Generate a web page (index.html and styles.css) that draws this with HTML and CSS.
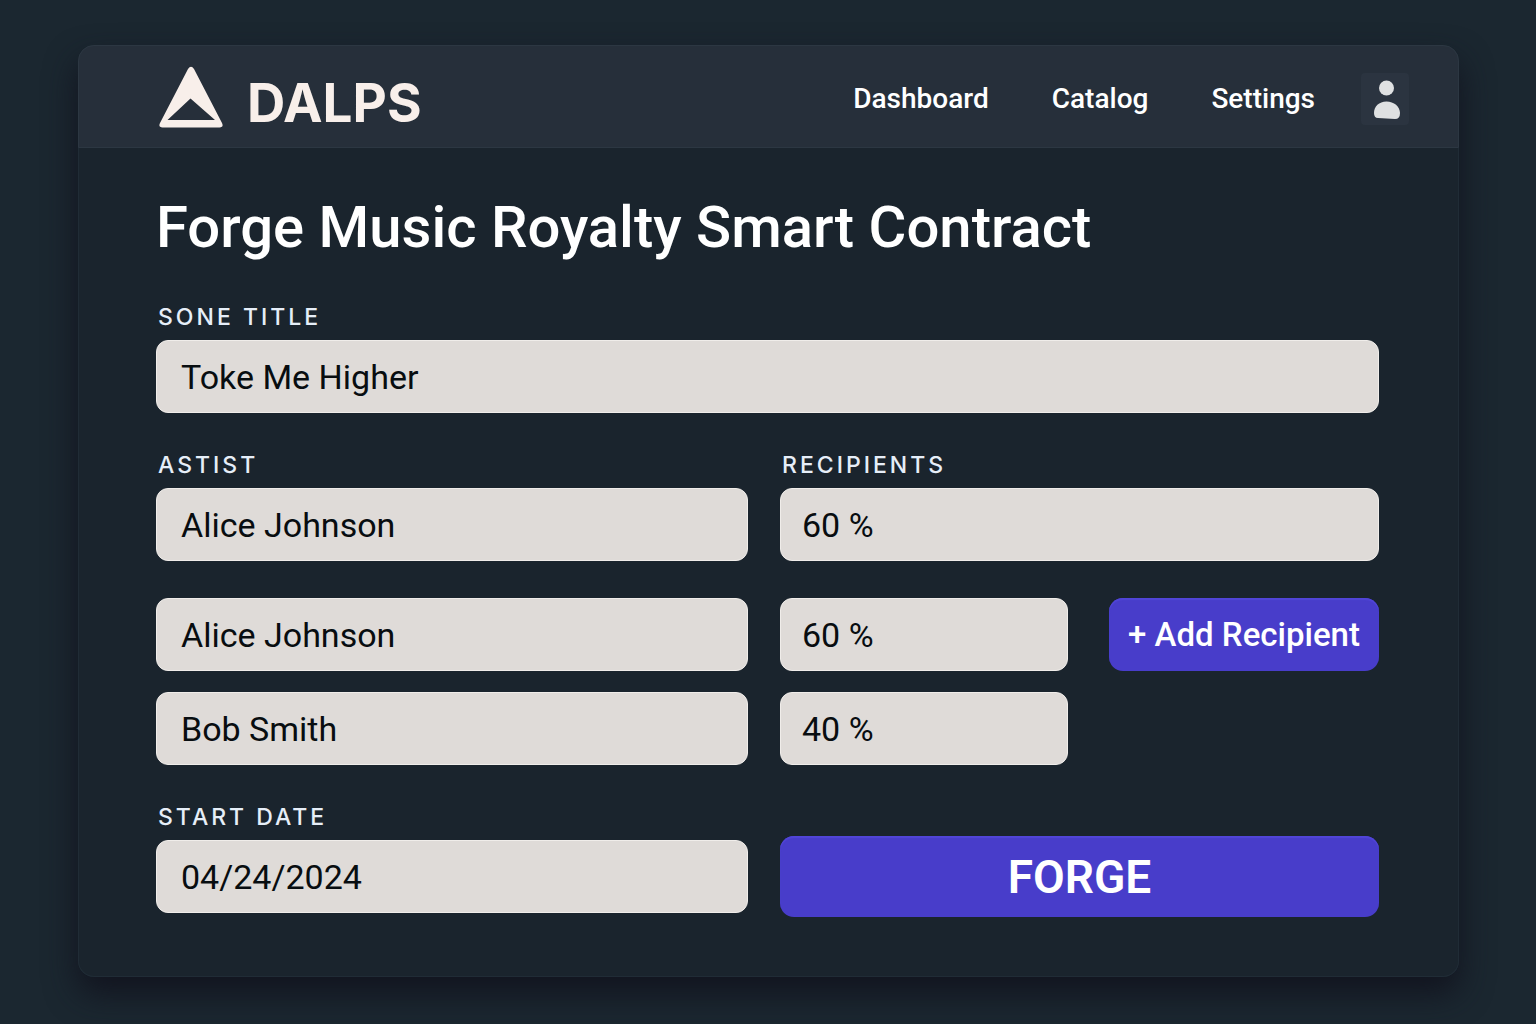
FILE: index.html
```
<!DOCTYPE html>
<html lang="en">
<head>
<meta charset="utf-8">
<meta name="viewport" content="width=device-width, initial-scale=1">
<title>DALPS – Forge Music Royalty Smart Contract</title>
<link rel="stylesheet" href="styles.css">
</head>
<body>
<div class="card">
  <header class="topbar">
    <a class="brand" href="#">
      <svg class="brand-mark" viewBox="0 0 64 62" aria-hidden="true">
        <path fill-rule="evenodd" d="M29 3Q32 -1.500 35 3L63 57Q65 61.500 60.500 61.500H3.500Q-1 61.500 1 57ZM31.500 32.500L8.500 54H56Z"/>
      </svg>
      <span class="brand-name">DALPS</span>
    </a>
    <nav class="nav" aria-label="Main">
      <a href="#">Dashboard</a>
      <a href="#">Catalog</a>
      <a href="#">Settings</a>
    </nav>
    <button class="avatar" type="button" aria-label="Account">
      <svg viewBox="0 0 28 40" aria-hidden="true">
        <circle cx="13.500" cy="8" r="7.500"/>
        <path d="M13.500 21.500C21 21.500 27 26.500 27 33Q27 39 22 39L5 38Q1 38 1 33C1 26.500 6 21.500 13.500 21.500Z"/>
      </svg>
    </button>
  </header>

  <main class="content">
    <h1>Forge Music Royalty Smart Contract</h1>
    <form class="form">
      <div class="field">
        <label for="title">SONE TITLE</label>
        <input id="title" type="text" value="Toke Me Higher">
      </div>

      <div class="pair">
        <div class="field">
          <label for="artist">ASTIST</label>
          <input id="artist" type="text" value="Alice Johnson">
        </div>
        <div class="field">
          <label for="recipients">RECIPIENTS</label>
          <input id="recipients" type="text" value="60 %">
        </div>
      </div>

      <div class="splits">
        <div class="pair">
          <input type="text" aria-label="Recipient 1 name" value="Alice Johnson">
          <div class="share">
            <input type="text" aria-label="Recipient 1 share" value="60 %">
            <button class="button add" type="button">+ Add Recipient</button>
          </div>
        </div>
        <div class="pair">
          <input type="text" aria-label="Recipient 2 name" value="Bob Smith">
          <div class="share">
            <input type="text" aria-label="Recipient 2 share" value="40 %">
          </div>
        </div>
      </div>

      <div class="pair">
        <div class="field">
          <label for="start">START DATE</label>
          <input id="start" type="text" value="04/24/2024">
        </div>
        <button class="button forge" type="submit">FORGE</button>
      </div>
    </form>
  </main>
</div>
</body>
</html>
```
FILE: styles.css
```
* {
  box-sizing: border-box;
}

body {
  margin: 0;
  min-height: 100vh;
  padding: 45px 77px 47px 78px;
  display: flex;
  background: #1b2730;
  color: #fff;
  font-family: Roboto, "Liberation Sans", sans-serif;
}

.card {
  flex: 1;
  display: flex;
  flex-direction: column;
  border-radius: 16px;
  background: #1a242d;
  box-shadow: 0 16px 32px 0 #12141f, inset 0 0 0 1px #202c36;
}

.topbar {
  height: 103px;
  padding: 0 49px 0 80px;
  display: flex;
  align-items: center;
  border: 1px solid #2c3742;
  border-radius: 16px 16px 0 0;
  background: #262f3a;
}

.brand {
  display: flex;
  align-items: center;
  gap: 24px;
  margin-right: auto;
  color: #f8efea;
  text-decoration: none;
}

.brand-mark {
  width: 64px;
  height: 62px;
  fill: currentColor;
}

.brand-name {
  padding-top: 12px;
  font: 700 53px/56px Inter, "Liberation Sans", sans-serif;
}

.nav {
  display: flex;
  gap: 63px;
  padding-top: 4px;
  font-size: 28px;
  line-height: 36px;
  font-weight: 500;
}

.nav a {
  color: #fff;
  text-decoration: none;
}

.avatar {
  width: 48px;
  height: 52px;
  margin: 4px 0 0 46px;
  padding: 2px 0 0 4px;
  display: grid;
  place-items: center;
  border: 0;
  border-radius: 4px;
  background: #2b3440;
}

.avatar svg {
  width: 28px;
  height: 40px;
  fill: #dfe1e2;
}

.content {
  padding: 44px 80px 58px 78px;
}

h1 {
  margin: 0 0 40px;
  font-size: 58px;
  line-height: 70px;
  font-weight: 500;
}

.form {
  display: flex;
  flex-direction: column;
  gap: 37px;
}

.field {
  display: flex;
  flex-direction: column;
  gap: 8px;
}

label {
  padding-left: 2px;
  color: #e6eef8;
  font: 500 23px/30px Inter, "Liberation Sans", sans-serif;
  letter-spacing: 3px;
}

input {
  width: 100%;
  min-width: 0;
  height: 73px;
  padding: 0 24px;
  border: 1px solid #f0edea;
  border-radius: 12px;
  background: #dfdbd8;
  color: #080d10;
  font: 400 34px/40px Roboto, "Liberation Sans", sans-serif;
}

.pair {
  display: grid;
  grid-template-columns: 592fr 599fr;
  gap: 32px;
}

.splits {
  display: flex;
  flex-direction: column;
  gap: 21px;
}

.share {
  display: grid;
  grid-template-columns: 288fr 270fr;
  gap: 41px;
}

.share input,
#recipients {
  padding-left: 21px;
}

.button {
  padding: 0;
  border: 0;
  border-radius: 14px;
  background: #483dca;
  box-shadow: inset 0 2px 1px #5145d8;
  color: #fff;
  font: 500 33px/40px Roboto, "Liberation Sans", sans-serif;
  white-space: nowrap;
}

.forge {
  height: 81px;
  margin-top: 34px;
  font-size: 46px;
  font-weight: 600;
}
```
